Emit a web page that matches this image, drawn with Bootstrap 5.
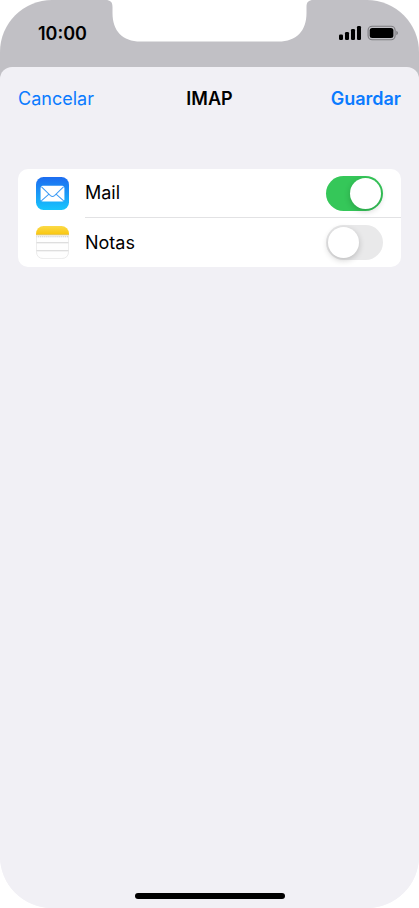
<!DOCTYPE html>
<html lang="es">
<head>
<meta charset="utf-8">
<meta name="viewport" content="width=device-width, initial-scale=1">
<title>IMAP</title>
<link href="https://cdn.jsdelivr.net/npm/bootstrap@5.3.0/dist/css/bootstrap.min.css" rel="stylesheet">
<style>
  body { background: #fff; font-family: Inter, "Liberation Sans", sans-serif; font-size: 18px; line-height: 24px; color: #000; }
  .phone { background: linear-gradient(#c1c0c5 50%, #f1f0f5 50%); border-radius: 52px; }
  .status { height: 67px; padding: 0 21px 0 38px; }
  .status-item { margin-top: 21px; }
  .clock { line-height: 26px; }
  .notch { top: 0; left: 50%; transform: translateX(-50%); }
  .sheet { background: #f1f0f5; border-radius: 12px 12px 0 0; }
  .sheet-bar { padding: 19px 18px 0; }
  .sheet-bar .btn { font-size: 18px; line-height: 24px; color: #0a7bff; }
  .sheet-title { font-size: 18px; line-height: 24px; }
  .accounts { margin: 58px 18px 0; border-radius: 10px; }
  .account { height: 49px; padding-left: 18px; gap: 16px; }
  .account-main { padding-right: 18px; }
  .account-main label { line-height: 26px; }
  .account:not(:last-child) .account-main { border-bottom: 1px solid #e2e2e4; }
  .form-switch .toggle {
    position: relative; width: 57px; height: 35px; margin: 0; border: 0; border-radius: 18px;
    background-color: #e9e9ea; background-image: none;
  }
  .form-switch .toggle::after {
    content: ""; position: absolute; top: 2px; left: 2px; width: 31px; height: 31px; border-radius: 50%;
    background: #fff; box-shadow: 0 2px 6px rgba(0,0,0,.2);
  }
  .form-switch .toggle:checked { background-color: #35c759; background-image: none; }
  .form-switch .toggle:checked::after { left: 24px; }
  .form-switch .toggle:focus { background-image: none; }
  .home-bar { width: 150px; height: 6px; margin-bottom: 9px; background: #000; }
</style>
<script src="https://cdn.jsdelivr.net/npm/bootstrap@5.3.0/dist/js/bootstrap.bundle.min.js"></script>
</head>
<body>
<div class="phone d-flex flex-column min-vh-100 overflow-hidden position-relative">
  <header class="status d-flex justify-content-between align-items-start">
    <span class="status-item clock fw-semibold">10:00</span>
    <svg class="notch position-absolute" width="209" height="42" viewBox="0 0 209 42" aria-hidden="true">
      <path fill="#fff" d="M0 0C5 0 7 2 7 7V13C7 31 17 41.500 35 41.500H173C191 41.500 201 31 201 13V7C201 2 203 0 208 0Z"/>
    </svg>
    <span class="status-item d-flex align-items-center">
      <svg width="60" height="24" viewBox="0 0 60 24" role="img" aria-label="Señal y batería">
        <rect x="1" y="13.500" width="4" height="5.500" rx="1.200"/>
        <rect x="7" y="11" width="4" height="8" rx="1.200"/>
        <rect x="13" y="8" width="4" height="11" rx="1.200"/>
        <rect x="19" y="5" width="4" height="14" rx="1.200"/>
        <rect x="30.100" y="5.300" width="27" height="13.400" rx="4" fill="none" stroke="#7d7c80" stroke-width="1.100"/>
        <rect x="31.700" y="6.900" width="23.700" height="10.200" rx="2.500"/>
        <path d="M58.300 9.700Q60 10.500 60 12T58.300 14.300Z" fill="#7d7c80"/>
      </svg>
    </span>
  </header>

  <main class="sheet d-flex flex-column flex-grow-1">
    <div class="sheet-bar row g-0 align-items-center">
      <div class="col"><button type="button" class="btn border-0 p-0">Cancelar</button></div>
      <h1 class="sheet-title col-auto fw-semibold m-0">IMAP</h1>
      <div class="col text-end"><button type="button" class="btn border-0 p-0 fw-semibold">Guardar</button></div>
    </div>

    <div class="accounts bg-white">
      <div class="account d-flex align-items-center">
        <svg class="flex-shrink-0" width="33" height="33" viewBox="0.8 0.8 32.4 32.4" aria-hidden="true">
          <defs><linearGradient id="sky" x2="0" y2="1"><stop stop-color="#1d6cf0"/><stop offset="1" stop-color="#17c5fd"/></linearGradient></defs>
          <rect x=".8" y=".8" width="32.400" height="32.400" rx="7.500" fill="url(#sky)"/>
          <rect x="5.300" y="9.500" width="23.400" height="15.300" rx="2" fill="#fff"/>
          <path d="M6 10.300L15 19Q17 20.800 19 19L28 10.300M6 24.200L13.500 17.600M28 24.200L20.500 17.600" fill="none" stroke="#3c9bf5" stroke-width="1"/>
        </svg>
        <div class="account-main d-flex align-items-center justify-content-between flex-grow-1 h-100">
          <label for="mail">Mail</label>
          <div class="form-check form-switch m-0 p-0 d-flex"><input class="form-check-input toggle" type="checkbox" role="switch" id="mail" checked></div>
        </div>
      </div>
      <div class="account d-flex align-items-center">
        <svg class="flex-shrink-0" width="33" height="33" viewBox="0.8 0.8 32.4 32.4" aria-hidden="true">
          <defs>
            <clipPath id="tile"><rect x=".8" y=".8" width="32.400" height="32.400" rx="7.500"/></clipPath>
            <linearGradient id="gold" x2="0" y2="1"><stop stop-color="#fbdc4e"/><stop offset="1" stop-color="#fac60d"/></linearGradient>
          </defs>
          <g clip-path="url(#tile)">
            <path fill="#fefefe" d="M0 0H34V34H0Z"/>
            <path fill="url(#gold)" d="M0 0H34V9.300H0Z"/>
            <path stroke="#d0b661" stroke-width=".7" d="M0 9.500H34"/>
            <path stroke="#b9b9b9" stroke-width="1" stroke-dasharray="1 1" d="M1 11.300H34"/>
            <path stroke="#d3d3d3" stroke-width="1" d="M0 17.200H34M0 25.100H34"/>
          </g>
          <path d="M1.200 10V25.500Q1.200 32.800 8.500 32.800H25.500Q32.800 32.800 32.800 25.500V10" fill="none" stroke="#e6e6e6" stroke-width=".8"/>
        </svg>
        <div class="account-main d-flex align-items-center justify-content-between flex-grow-1 h-100">
          <label for="notas">Notas</label>
          <div class="form-check form-switch m-0 p-0 d-flex"><input class="form-check-input toggle" type="checkbox" role="switch" id="notas"></div>
        </div>
      </div>
    </div>

    <div class="home-bar rounded-pill mt-auto mx-auto"></div>
  </main>
</div>
</body>
</html>
